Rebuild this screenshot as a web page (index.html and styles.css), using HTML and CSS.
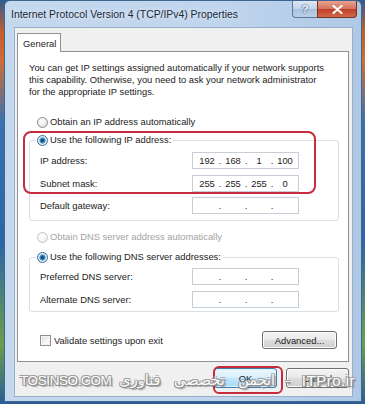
FILE: index.html
```html
<!DOCTYPE html>
<html>
<head>
<meta charset="utf-8">
<title>Internet Protocol Version 4 (TCP/IPv4) Properties</title>
<link rel="stylesheet" href="styles.css">
</head>
<body>
<div class="window">
  <div class="titlebar">
    <div class="title">Internet Protocol Version 4 (TCP/IPv4) Properties</div>
    <div class="caption">
      <div class="cbtn help">?</div>
      <div class="cbtn close">
        <svg width="11" height="9" viewBox="0 0 11 9"><path d="M1.5 1 L9.5 8 M9.5 1 L1.5 8" stroke="#fff" stroke-width="2.2" stroke-linecap="round"/></svg>
      </div>
    </div>
  </div>
  <div class="client">
    <div class="tabs"><div class="tab">General</div></div>
    <div class="panel">
      <p class="intro">You can get IP settings assigned automatically if your network supports<br>this capability. Otherwise, you need to ask your network administrator<br>for the appropriate IP settings.</p>
      <div class="opt opt-ipauto"><span class="radio"></span>Obtain an IP address automatically</div>
      <fieldset class="group group-ip">
        <legend class="opt"><span class="radio on"></span>Use the following IP address:</legend>
        <div class="row row-first"><span class="lbl">IP address:</span>
          <div class="ip"><span>192</span><i>.</i><span>168</span><i>.</i><span>1</span><i>.</i><span>100</span></div>
        </div>
        <div class="row row-second"><span class="lbl">Subnet mask:</span>
          <div class="ip"><span>255</span><i>.</i><span>255</span><i>.</i><span>255</span><i>.</i><span>0</span></div>
        </div>
        <div class="row row-third"><span class="lbl">Default gateway:</span>
          <div class="ip"><span></span><i>.</i><span></span><i>.</i><span></span><i>.</i><span></span></div>
        </div>
      </fieldset>
      <div class="opt opt-dnsauto disabled"><span class="radio off"></span>Obtain DNS server address automatically</div>
      <fieldset class="group group-dns">
        <legend class="opt"><span class="radio on"></span>Use the following DNS server addresses:</legend>
        <div class="row row-first"><span class="lbl">Preferred DNS server:</span>
          <div class="ip"><span></span><i>.</i><span></span><i>.</i><span></span><i>.</i><span></span></div>
        </div>
        <div class="row row-second"><span class="lbl">Alternate DNS server:</span>
          <div class="ip"><span></span><i>.</i><span></span><i>.</i><span></span><i>.</i><span></span></div>
        </div>
      </fieldset>
      <div class="bottomrow">
        <div class="check"><span class="box"></span>Validate settings upon exit</div>
        <div class="btn adv">Advanced...</div>
      </div>
    </div>
    <div class="buttons">
      <div class="btn default">OK</div>
      <div class="btn">Cancel</div>
    </div>
  </div>
  <div class="hl hl-ip"></div>
  <div class="hl hl-ok"></div>
  <div class="watermark">
    <span class="wm-a">TOSINSO.COM</span>
    <span class="wm-b" dir="rtl">انجمن تخصصی فناوری</span>
    <span class="wm-c">-</span>
    <span class="wm-d">ITPro.ir</span>
  </div>
</div>
</body>
</html>
```
FILE: styles.css
```css
* { box-sizing: border-box; }
html, body { margin: 0; padding: 0; }
body {
  width: 365px;
  height: 404px;
  overflow: hidden;
  background: linear-gradient(to bottom, #2d5c93 0, #c85c2a 8%, #d06d34 15%, #3a72ae 30%, #2c66a8 60%, #6b9f4a 85%, #2a5c96 100%);
  font-family: "Liberation Sans", Arial, sans-serif;
  font-size: 9.4px;
  color: #1b1b1b;
}

.window {
  position: relative;
  margin-left: 4px;
  width: 358px;
  height: 402px;
  border: 1px solid #3f6590;
  border-radius: 6px 6px 0 0;
  background: linear-gradient(to right, #c4d8ee 0, #c0d5ed 60%, #aec8e6 100%);
  padding: 0 8px 4px 9px;
  display: flex;
  flex-direction: column;
}

.titlebar {
  height: 26px;
  display: flex;
  justify-content: space-between;
  margin: 0 -4px 0 -3px;
}
.title {
  padding-top: 7px;
  font-size: 10.4px;
  line-height: 14px;
  color: #1c2a3a;
  text-shadow: 0 0 5px rgba(255,255,255,0.9);
}
.caption {
  display: flex;
  align-self: flex-start;
}
.cbtn {
  height: 17px;
  display: flex;
  align-items: center;
  justify-content: center;
  border: 1px solid #59769b;
  border-top: none;
}
.help {
  width: 25px;
  border-radius: 0 0 0 4px;
  border-right: none;
  background: linear-gradient(to bottom, #dce7f3 0, #c3d5ea 48%, #a9c0dd 52%, #bcd0e8 100%);
  color: #fff;
  font-weight: bold;
  font-size: 11px;
  text-shadow: 0 0 2px #2e4e78, 0 0 1px #2e4e78;
}
.close {
  width: 40px;
  border-radius: 0 0 4px 0;
  border-color: #7c3024;
  background: linear-gradient(to bottom, #e6a393 0, #d5735d 48%, #c03f27 52%, #d0694a 100%);
}

.client {
  width: 339px;
  height: 370px;
  border: 1px solid #98adc6;
  background: #f0f0f0;
  padding: 5px 3px 0 2px;
  display: flex;
  flex-direction: column;
}
.tabs { display: flex; }
.tab {
  position: relative;
  z-index: 1;
  width: 44px;
  height: 19px;
  margin-bottom: -1px;
  border: 1px solid #8e9199;
  border-bottom: none;
  background: #fff;
  padding: 4px 0 0 5px;
  line-height: 12px;
}
.panel {
  width: 332px;
  height: 311px;
  border: 1px solid #8e9199;
  background: #fff;
  padding: 0;
}
.intro {
  margin: 10px 0 0 11px;
  line-height: 12px;
}
.opt {
  display: flex;
  align-items: center;
  height: 14px;
  line-height: 14px;
  white-space: nowrap;
}
.opt-ipauto { margin-top: 17px; padding-left: 19px; }
.opt-dnsauto { margin-top: 9px; padding-left: 19px; }
.disabled { color: #a3a3a3; }

.radio {
  width: 11px;
  height: 11px;
  border-radius: 50%;
  border: 1px solid #8a8a8a;
  background: radial-gradient(circle at 40% 35%, #ffffff 0, #f0f0f0 45%, #d3d3d3 100%);
  margin-right: 2px;
  flex: none;
}
.radio.on {
  border-color: #3a6d96;
  background: radial-gradient(circle at 50% 50%, #0f3f66 0, #1d5f93 25%, #5fb0e0 45%, #e7eef4 55%, #d8dde2 100%);
}
.radio.off {
  border-color: #c4c4c4;
  background: radial-gradient(circle at 40% 35%, #ffffff 0, #f4f4f4 60%, #e6e6e6 100%);
}

.group {
  margin: 0 0 0 11px;
  padding: 0 0 0 0;
  width: 310px;
  min-width: 0;
  border: 1px solid #d5dfe5;
  border-radius: 3px;
}
.group legend {
  margin-left: 6px;
  padding: 0 2px 0 1px;
}
.group-ip { margin-top: 4px; padding-bottom: 6px; }
.group-dns { margin-top: 6px; padding-bottom: 3px; }

.row {
  display: flex;
  align-items: center;
  height: 17px;
  padding-left: 10px;
}
.group-ip .row-first { margin-top: 5px; }
.group-ip .row-second { margin-top: 6px; }
.group-ip .row-third { margin-top: 5px; }
.group-dns .row-first { margin-top: 4px; }
.group-dns .row-second { margin-top: 6px; }
.lbl { width: 152px; flex: none; }

.ip {
  width: 107px;
  height: 17px;
  border: 1px solid #c9ced6;
  background: #fff;
  display: grid;
  grid-template-columns: 1fr 4px 1fr 4px 1fr 4px 1fr;
  padding: 0 2px 0 3px;
  line-height: 15px;
  color: #222;
}
.ip span { text-align: center; }
.ip i { font-style: normal; text-align: center; }

.bottomrow {
  margin-top: 19px;
  height: 18px;
  display: flex;
  align-items: center;
  justify-content: space-between;
  padding: 0 11px 0 22px;
}
.check { display: flex; align-items: center; }
.box {
  width: 11px;
  height: 11px;
  border: 1px solid #8f8f8f;
  background: linear-gradient(135deg, #dcdcdc 0, #f6f6f6 60%, #ffffff 100%);
  box-shadow: inset 0 0 0 1px #f4f4f4;
  margin-right: 3px;
}

.btn {
  display: flex;
  align-items: center;
  justify-content: center;
  border: 1px solid #707070;
  border-radius: 3px;
  background: linear-gradient(to bottom, #f3f3f3 0, #ebebeb 45%, #dddddd 52%, #cfcfcf 100%);
  box-shadow: inset 0 0 0 1px #fbfbfb;
  color: #1b1b1b;
}
.adv { width: 75px; height: 18px; }
.buttons {
  margin-top: 6px;
  display: flex;
  justify-content: flex-end;
  gap: 9px;
  padding-right: 0;
}
.buttons .btn { width: 63px; height: 20px; }
.btn.default {
  border-color: #3c7fb1;
  background: linear-gradient(to bottom, #eaf6fd 0, #d9f0fc 45%, #bee6fd 52%, #a7d9f5 100%);
  box-shadow: inset 0 0 0 1px #e2f3fc;
}

.hl {
  position: absolute;
  border: 2px solid #c62c3d;
  pointer-events: none;
}
.hl-ip { left: 18px; top: 130px; width: 293px; height: 63px; border-radius: 8px; }
.hl-ok { left: 208px; top: 365px; width: 70px; height: 28px; border-radius: 6px; }

.watermark {
  position: absolute;
  left: 15px;
  top: 369px;
  width: 335px;
  height: 20px;
  display: flex;
  align-items: center;
  font-family: "Liberation Sans", "DejaVu Sans", sans-serif;
  font-size: 13.5px;
  color: #fdfdfd;
  text-shadow: 1px 1px 0 #8c8c8c, -1px -1px 0 #a0a0a0, 1px -1px 0 #a0a0a0, -1px 1px 0 #969696, 2px 2px 1px rgba(90,90,90,0.5);
  white-space: nowrap;
  pointer-events: none;
}
.wm-a { letter-spacing: -0.4px; }
.wm-b { margin-left: 8px; font-family: "DejaVu Sans", sans-serif; font-size: 14.5px; word-spacing: 9px; }
.wm-c { margin-left: 10px; }
.wm-d { margin-left: auto; font-size: 15px; letter-spacing: 0.5px; }
```
